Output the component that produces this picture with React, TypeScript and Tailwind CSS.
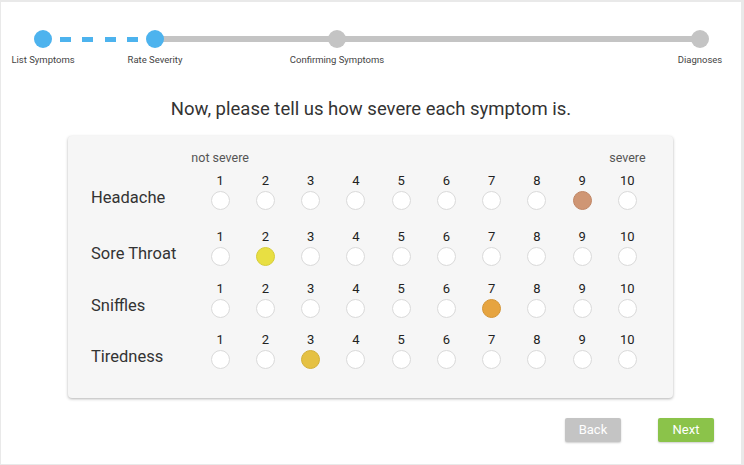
const symptoms = [
  { name: 'Headache', value: 9, color: 'bg-[#cf9674] border-[#c08665]', gap: 'mt-[7px]' },
  { name: 'Sore Throat', value: 2, color: 'bg-[#e8df42] border-[#d6cd38]', gap: 'mt-[19px]' },
  { name: 'Sniffles', value: 7, color: 'bg-[#e6a440] border-[#d49536]', gap: 'mt-[15px]' },
  { name: 'Tiredness', value: 3, color: 'bg-[#e5c143] border-[#d3b038]', gap: 'mt-[14px]' },
];

const levels = [1, 2, 3, 4, 5, 6, 7, 8, 9, 10];

function StepNode({ label, active }: { label: string; active: boolean }) {
  return (
    <div className="relative flex w-[18px] shrink-0 flex-col items-center">
      <div className={`size-[18px] rounded-full ${active ? 'bg-[#4db3ee]' : 'bg-[#c4c4c4]'}`} />
      <span className="absolute top-[24px] whitespace-nowrap text-[9.5px] leading-[12px] text-[#444]">
        {label}
      </span>
    </div>
  );
}

function Stepper() {
  return (
    <div className="flex items-center pl-[33px] pt-[28px]">
      <StepNode label="List Symptoms" active />
      <div className="flex w-[94px] justify-center gap-[11.5px]">
        {[0, 1, 2, 3].map((i) => (
          <div key={i} className="h-[5px] w-[11px] bg-[#4db3ee]" />
        ))}
      </div>
      <StepNode label="Rate Severity" active />
      <div className="-mx-px h-[6px] w-[166px] bg-[#c4c4c4]" />
      <StepNode label="Confirming Symptoms" active={false} />
      <div className="-mx-px h-[6px] w-[347px] bg-[#c4c4c4]" />
      <StepNode label="Diagnoses" active={false} />
    </div>
  );
}

export default function App() {
  return (
    <div
      className="h-[465px] w-[744px] bg-[#e9e9e9] pb-px pl-px pr-[3px] pt-[2px]"
      style={{ fontFamily: 'Roboto, "Liberation Sans", sans-serif' }}
    >
      <div className="flex h-full flex-col bg-white">
        <Stepper />

        <h1 className="mt-[49px] text-center text-[18.5px] leading-[24px] text-[#333]">
          Now, please tell us how severe each symptom is.
        </h1>

        <div className="ml-[67px] mt-[15px] w-[605px] rounded-[4px] bg-[#f6f6f6] pb-[29px] pt-[14px] shadow-[0_1px_3px_rgba(0,0,0,0.3)]">
          <div className="flex pl-[129.5px] text-[12.5px] leading-[16px] text-[#555]">
            <div className="flex w-[45.25px] justify-center whitespace-nowrap">not severe</div>
            <div className="w-[362px]" />
            <div className="flex w-[45.25px] justify-center whitespace-nowrap">severe</div>
          </div>

          {symptoms.map((s) => (
            <div key={s.name} className={`flex ${s.gap}`}>
              <div className="flex w-[129.5px] items-center pl-[23px] pt-[13px] text-[16.5px] leading-[20px] text-[#333]">
                {s.name}
              </div>
              {levels.map((n) => (
                <div key={n} className="flex w-[45.25px] flex-col items-center">
                  <span className="text-[13px] leading-[16px] text-[#222]">{n}</span>
                  <div
                    className={`mt-[2px] size-[19px] rounded-full border ${
                      n === s.value ? s.color : 'border-[#dadada] bg-white'
                    }`}
                  />
                </div>
              ))}
            </div>
          ))}
        </div>

        <div className="mt-[20px] flex justify-end gap-[37px] pr-[27px]">
          <button className="h-[24px] w-[56px] rounded-[2px] bg-[#c4c4c4] text-[13px] text-white shadow-[0_1px_2px_rgba(0,0,0,0.2)]">
            Back
          </button>
          <button className="h-[24px] w-[56px] rounded-[2px] bg-[#8bc34a] text-[13px] text-white shadow-[0_1px_2px_rgba(0,0,0,0.2)]">
            Next
          </button>
        </div>
      </div>
    </div>
  );
}
